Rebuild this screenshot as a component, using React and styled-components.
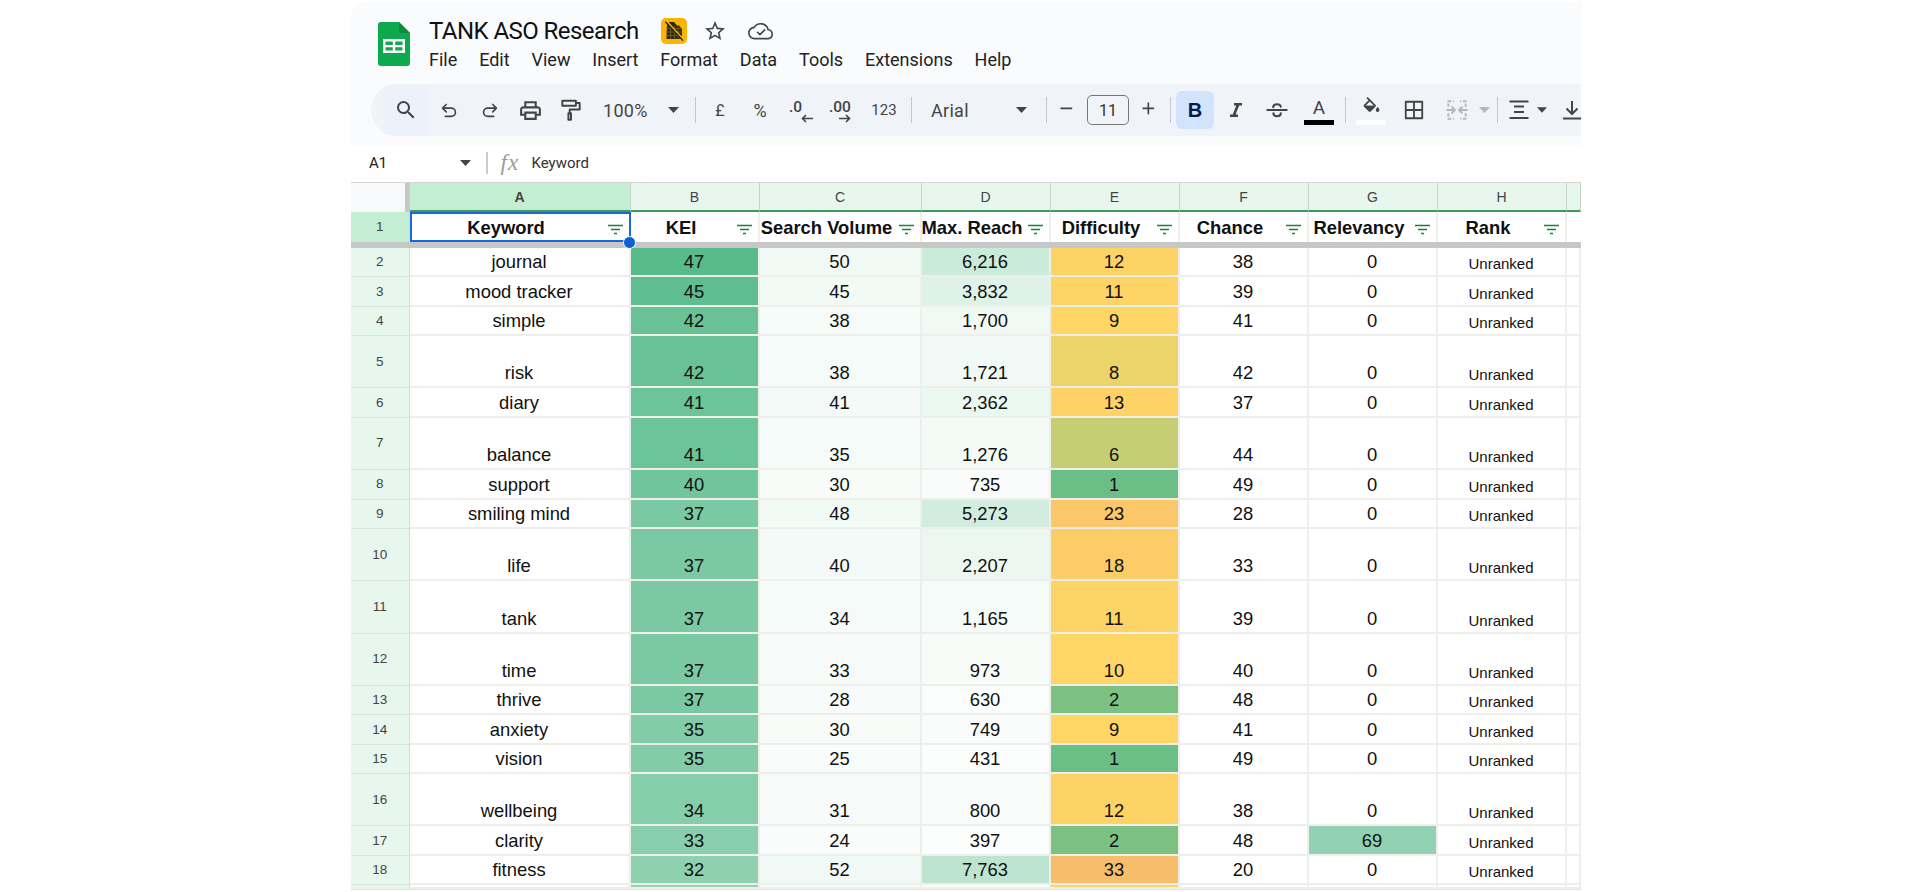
import React from "react";
import styled, { createGlobalStyle } from "styled-components";

const GlobalStyle = createGlobalStyle`
  html, body { margin: 0; padding: 0; background: #fff; height: 100%; overflow: hidden; }
  #root { height: 100%; }
  * { box-sizing: border-box; }
`;

const Page = styled.div`
  height: 892px;
  padding: 2px 339px 0 351px;
  background: #fff;
`;
const Panel = styled.div`
  height: 890px;
  overflow: hidden;
  display: flex;
  flex-direction: column;
  border-top-left-radius: 16px;
`;

/* ---------- header ---------- */
const Header = styled.header`
  background: #f9fbfd;
  height: 144px;
  flex: none;
`;
const TopBar = styled.div`
  height: 82px;
  display: flex;
  padding-left: 27px;
  font-family: Roboto, "Liberation Sans", sans-serif;
`;
const LogoBox = styled.div`
  margin-top: 20px;
  width: 32px;
  height: 44px;
  flex: none;
`;
const TitleBlock = styled.div`
  margin-left: 19px;
  padding-top: 14px;
  display: flex;
  flex-direction: column;
`;
const TitleRow = styled.div`
  height: 30px;
  display: flex;
  align-items: center;
`;
const DocTitle = styled.div`
  font-size: 24px;
  letter-spacing: -0.55px;
  color: #111;
  width: 210px;
  white-space: nowrap;
`;
const Badge = styled.div`
  margin-left: 22px;
  width: 26px;
  height: 26px;
  border-radius: 5px;
  background: #fbb304;
  display: flex;
  align-items: center;
  justify-content: center;
`;
const StarBox = styled.div`
  margin-left: 16px;
  display: flex;
`;
const CloudBox = styled.div`
  margin-left: 21px;
  display: flex;
`;
const MenuRow = styled.nav`
  height: 28px;
  margin-top: -1px;
  display: flex;
  align-items: center;
  gap: 21.9px;
  font-size: 18px;
  color: #222;
`;
const MenuItem = styled.span`
  white-space: nowrap;
`;

/* ---------- toolbar ---------- */
const Toolbar = styled.div`
  margin-left: 20px;
  height: 52px;
  border-radius: 26px 0 0 26px;
  background: #f0f3f8;
  display: flex;
  align-items: center;
  padding-left: 12px;
  overflow: hidden;
  font-family: Roboto, "Liberation Sans", sans-serif;
  color: #444;
`;
const Tool = styled.div`
  flex: none;
  width: ${(p) => p.$w || 40}px;
  margin-left: ${(p) => p.$ml || 0}px;
  padding-left: ${(p) => p.$pl || 0}px;
  height: 38px;
  display: flex;
  align-items: center;
  justify-content: center;
  font-size: ${(p) => p.$size || 16}px;
  color: ${(p) => p.$color || "#444"};
`;
const SearchTool = styled(Tool)`
  height: 52px;
  background: #edf2fa;
`;
const Label = styled(Tool)`
  justify-content: flex-start;
  font-size: 18px;
  letter-spacing: 0.3px;
`;
const Sep = styled.div`
  flex: none;
  width: 1px;
  height: 26px;
  margin-left: ${(p) => p.$ml || 0}px;
  background: #c4c7cb;
`;
const SizeBox = styled.div`
  flex: none;
  width: 42px;
  height: 30px;
  margin-left: 1px;
  border: 1.5px solid #747775;
  border-radius: 5px;
  display: flex;
  align-items: center;
  justify-content: center;
  font-size: 16px;
  color: #333;
`;
const BoldButton = styled.div`
  flex: none;
  width: 38px;
  height: 38px;
  margin-left: 5px;
  border-radius: 6px;
  background: #d3e3fd;
  color: #041e49;
  display: flex;
  align-items: center;
  justify-content: center;
  font: 700 20px "Liberation Sans", sans-serif;
`;
const StackTool = styled(Tool)`
  flex-direction: column;
  gap: 2px;
  padding-top: 2px;
`;
const ColourBar = styled.div`
  width: 30px;
  height: 5px;
  background: ${(p) => p.$color};
`;
const Glyph = styled.span`
  height: 20px;
  line-height: 20px;
  font-size: 19px;
`;
const Decimal = styled.div`
  display: flex;
  flex-direction: column;
  align-items: flex-end;
  font-size: 15.5px;
  font-weight: 500;
  line-height: 14px;
  width: ${(p) => p.$w}px;
  margin-top: 2px;
`;
const DecimalText = styled.span`
  align-self: flex-start;
`;
const PushedArrow = styled.span`
  display: flex;
  margin-right: ${(p) => p.$mr || 0}px;
`;

/* ---------- formula bar ---------- */
const FormulaBar = styled.div`
  flex: none;
  height: 36px;
  padding-bottom: 2px;
  background: #fff;
  display: flex;
  align-items: center;
  font-family: Roboto, "Liberation Sans", sans-serif;
  color: #222;
`;
const CellName = styled.div`
  width: 109px;
  padding-left: 18px;
  font-size: 15px;
  flex: none;
`;
const FormulaSep = styled.div`
  flex: none;
  width: 1.5px;
  height: 22px;
  margin-left: 15px;
  background: #c9ccd0;
`;
const Fx = styled.div`
  margin-left: 13px;
  width: 19px;
  font: italic 23px "Liberation Serif", serif;
  letter-spacing: 1px;
  color: #9a9a9a;
  flex: none;
`;
const FormulaText = styled.div`
  margin-left: 12px;
  font-size: 15px;
  color: #333;
`;

/* ---------- sheet ---------- */
const columns = "58.5px 221px 129px 162px 129px 129px 129px 129px 129px 14.5px";
const SheetRow = styled.div`
  display: grid;
  grid-template-columns: ${columns};
  flex: none;
`;
const ColumnHeads = styled(SheetRow)`
  height: 30px;
  border-top: 1.5px solid #d3d6d4;
`;
const Corner = styled.div`
  background: #f8f9fa;
  border-right: 5px solid #c7c7c7;
`;
const ColumnHead = styled.div`
  background: ${(p) => (p.$active ? "#c3eed1" : "#e7f7ee")};
  border-right: 1.5px solid #c6d2ca;
  border-bottom: 2px solid #42985a;
  display: flex;
  align-items: center;
  justify-content: center;
  font: ${(p) => (p.$active ? 700 : 400)} 14px "Liberation Sans", sans-serif;
  color: #444;
`;
const TitleCells = styled(SheetRow)`
  height: 30px;
`;
const RowHead = styled.div`
  background: ${(p) => (p.$active ? "#c3eed1" : "#e7f7ee")};
  border-right: 1.5px solid #d3dbd5;
  border-bottom: ${(p) => (p.$plain ? 0 : "1.5px solid #d9e3dc")};
  display: flex;
  align-items: center;
  justify-content: center;
  padding-bottom: 1px;
  font: 13.5px "Liberation Sans", sans-serif;
  color: #444;
`;
const HeadCell = styled.div`
  position: relative;
  background: #fff;
  border-right: 2px solid #eeeeeb;
  padding-right: 26px;
  padding-top: 1px;
  display: flex;
  align-items: center;
  justify-content: center;
  white-space: nowrap;
  font: 700 18.4px "Liberation Sans", sans-serif;
  color: #111;
  outline: ${(p) => (p.$selected ? "2.5px solid #1a66dd" : "none")};
  outline-offset: -2.5px;
`;
const FilterMark = styled.svg`
  position: absolute;
  right: 6px;
  top: 12px;
`;
const Handle = styled.div`
  position: absolute;
  right: -7px;
  bottom: -7px;
  width: 13px;
  height: 13px;
  border-radius: 50%;
  background: #0f5fd6;
  border: 1px solid #fff;
  z-index: 2;
`;
const FreezeBar = styled.div`
  flex: none;
  height: 6px;
  background: #c7c7c7;
`;
const DataRow = styled(SheetRow)`
  height: ${(p) => (p.$tall ? 52.4 : 29.35)}px;
`;
const Cell = styled.div`
  display: flex;
  align-items: flex-end;
  justify-content: center;
  border-right: 2px solid #eeeeeb;
  border-bottom: 2px solid #eeeeeb;
  font: 18.4px/27px "Liberation Sans", sans-serif;
  color: #111;
  white-space: nowrap;
`;
const RankCell = styled(Cell)`
  font-size: 15px;
  line-height: 23px;
`;
const Rows = styled.div`
  flex: 1;
  min-height: 0;
  overflow: hidden;
  display: flex;
  flex-direction: column;
`;
const BottomEdge = styled.div`
  flex: none;
  height: 3px;
  border-top: 1.5px solid #e1e3e1;
  background: #fff;
`;
const PartialRow = styled(SheetRow)`
  height: 4px;
`;

/* ---------- colour scales ---------- */
const lerp = (a, b, t) => a.map((v, i) => Math.round(v + (b[i] - v) * t));
const rgb = (c) => `rgb(${c.join(",")})`;
const WHITE = [255, 255, 255];
const GREEN = [87, 187, 138];
const YELLOW = [255, 214, 102];
const RED = [230, 124, 115];
const greenScale = (v, max) => rgb(lerp(WHITE, GREEN, Math.min(v / max, 1)));
const diffScale = (v) =>
  v <= 9 ? rgb(lerp(GREEN, YELLOW, v / 9)) : rgb(lerp(YELLOW, RED, (v - 9) / 86));

const rows = [
  ["journal", 47, 50, 6216, 12, 38, 0],
  ["mood tracker", 45, 45, 3832, 11, 39, 0],
  ["simple", 42, 38, 1700, 9, 41, 0],
  ["risk", 42, 38, 1721, 8, 42, 0, true],
  ["diary", 41, 41, 2362, 13, 37, 0],
  ["balance", 41, 35, 1276, 6, 44, 0, true],
  ["support", 40, 30, 735, 1, 49, 0],
  ["smiling mind", 37, 48, 5273, 23, 28, 0],
  ["life", 37, 40, 2207, 18, 33, 0, true],
  ["tank", 37, 34, 1165, 11, 39, 0, true],
  ["time", 37, 33, 973, 10, 40, 0, true],
  ["thrive", 37, 28, 630, 2, 48, 0],
  ["anxiety", 35, 30, 749, 9, 41, 0],
  ["vision", 35, 25, 431, 1, 49, 0],
  ["wellbeing", 34, 31, 800, 12, 38, 0, true],
  ["clarity", 33, 24, 397, 2, 48, 69],
  ["fitness", 32, 52, 7763, 33, 20, 0],
];
const heads = ["Keyword", "KEI", "Search Volume", "Max. Reach", "Difficulty", "Chance", "Relevancy", "Rank"];

/* ---------- icons ---------- */
const Icon = ({ size = 24, vb = "0 0 24 24", color = "#444", children }) => (
  <svg width={size} height={size} viewBox={vb} fill="none" stroke={color} strokeWidth="1.8" strokeLinecap="round" strokeLinejoin="round">
    {children}
  </svg>
);
const Fill = ({ d, color = "#444" }) => <path d={d} fill={color} stroke="none" />;

const SheetsLogo = () => (
  <svg width="32" height="44" viewBox="0 0 32 44">
    <path d="M3 0H21L32 11V41a3 3 0 0 1-3 3H3a3 3 0 0 1-3-3V3a3 3 0 0 1 3-3z" fill="#0ea94f" />
    <path d="M21 0L32 11H23a2 2 0 0 1-2-2z" fill="#0b8a40" />
    <path d="M5 17H27V31H5zM7.5 19.5V23H14.8V19.5zM17.2 19.5V23H24.5V19.5zM7.5 25.2V28.5H14.8V25.2zM17.2 25.2V28.5H24.5V25.2z" fill="#fff" fillRule="evenodd" />
  </svg>
);
const BadgeIcon = () => (
  <svg width="24" height="24" viewBox="0 0 24 24">
    <path d="M5 3H12L15 6.5H17L20 10V20H4.5z" fill="#2b2a20" />
    <path d="M4.5 9.5H20M4.5 13H20M4.5 16.5H20M8.5 7V20M12.5 7V20M16 7V20" stroke="#7f6a14" strokeWidth=".7" fill="none" />
    <path d="M4.2 1.6L22 21" stroke="#fbb304" strokeWidth="1.6" />
    <path d="M3.4 2.8L21 21.6" stroke="#2b2a20" strokeWidth="1.3" />
  </svg>
);
const StarIcon = () => (
  <Icon><Fill d="M22 9.24l-7.19-.62L12 2 9.19 8.63 2 9.24l5.46 4.73L5.82 21 12 17.27 18.18 21l-1.63-7.03L22 9.24zM12 15.4l-3.76 2.27 1-4.28-3.32-2.88 4.38-.38L12 6.1l1.71 4.04 4.38.38-3.32 2.88 1 4.28L12 15.4z" /></Icon>
);
const CloudIcon = () => (
  <Icon size={26}>
    <path d="M19 19H6.2a5.2 5.2 0 0 1-.4-10.4A7 7 0 0 1 18.6 10.9 4.1 4.1 0 0 1 19 19z" strokeWidth="1.5" />
    <path d="M8.8 13.2L11 15.4L15.4 11" strokeWidth="1.5" />
  </Icon>
);
const SearchIcon = () => (
  <Icon><Fill d="M15.5 14h-.79l-.28-.27A6.47 6.47 0 0 0 16 9.5 6.5 6.5 0 1 0 9.5 16c1.61 0 3.09-.59 4.23-1.57l.27.28v.79l5 4.99L20.49 19l-4.99-5zm-6 0C7.01 14 5 11.99 5 9.5S7.01 5 9.5 5 14 7.01 14 9.5 11.99 14 9.5 14z" /></Icon>
);
const UndoIcon = () => (
  <Icon size={22}><path d="M9 6L5 10L9 14M5 10H14.5a4.5 4.5 0 0 1 0 9H8" /></Icon>
);
const RedoIcon = () => (
  <Icon size={22}><path d="M15 6L19 10L15 14M19 10H9.5a4.5 4.5 0 0 0 0 9H16" /></Icon>
);
const PrintIcon = () => (
  <Icon size={25}><Fill d="M19 8h-1V3H6v5H5c-1.66 0-3 1.34-3 3v6h4v4h12v-4h4v-6c0-1.66-1.34-3-3-3zM8 5h8v3H8V5zm8 12v2H8v-4h8v2zm2-2v-2H6v2H4v-4c0-.55.45-1 1-1h14c.55 0 1 .45 1 1v4h-2z" /></Icon>
);
const PaintIcon = () => (
  <Icon size={26}>
    <path d="M4 3.5H16.5V8H4zM16.5 5.5H20V11.5H10.8V15" />
    <path d="M9.6 15H12V21H9.6z" />
  </Icon>
);
const Caret = ({ color = "#444" }) => (
  <svg width="11" height="6" viewBox="0 0 11 6"><path d="M0 0H11L5.5 6z" fill={color} /></svg>
);
const ArrowLeft = () => (
  <svg width="12" height="9" viewBox="0 0 12 9" fill="none" stroke="#444" strokeWidth="1.6"><path d="M12 4.5H1.5M5 1L1.5 4.5L5 8" /></svg>
);
const ArrowRight = () => (
  <svg width="12" height="9" viewBox="0 0 12 9" fill="none" stroke="#444" strokeWidth="1.6"><path d="M0 4.5H10.5M7 1L10.5 4.5L7 8" /></svg>
);
const ItalicIcon = () => (
  <Icon size={24}><Fill d="M10 5v2.4h2.3l-3.6 9.2H6V19h8v-2.4h-2.4l3.6-9.2H18V5z" /></Icon>
);
const StrikeIcon = () => (
  <Icon size={26}>
    <path d="M3 12H21" strokeWidth="1.7" />
    <path d="M8.5 9.5C8.5 5.8 15.5 5.8 15.5 9" strokeWidth="1.9" />
    <path d="M8.7 15C8.7 18.6 15.5 18.6 15.5 15" strokeWidth="1.9" />
  </Icon>
);
const BucketIcon = () => (
  <Icon size={21}>
    <Fill d="M16.56 8.94L7.62 0 6.21 1.41l2.38 2.38-5.15 5.15c-.59.59-.59 1.54 0 2.12l5.5 5.5c.29.29.68.44 1.06.44s.77-.15 1.06-.44l5.5-5.5c.59-.58.59-1.53 0-2.12zM5.21 10L10 5.21 14.79 10H5.21zM19 11.5s-2 2.17-2 3.5c0 1.1.9 2 2 2s2-.9 2-2c0-1.33-2-3.5-2-3.5z" />
    <Fill d="M5 10H15L10 15z" />
  </Icon>
);
const BordersIcon = () => (
  <Icon size={22}><path d="M3 3H21V21H3zM12 3V21M3 12H21" strokeWidth="2" strokeLinecap="butt" /></Icon>
);
const MergeIcon = () => (
  <Icon size={26} color="#b4b6b9">
    <path d="M4 9V4H9M20 9V4H15M4 15V20H9M20 15V20H15" strokeLinecap="butt" strokeDasharray="3 1.5" />
    <path d="M3 12H10M7.5 9.5L10 12L7.5 14.5M21 12H14M16.5 9.5L14 12L16.5 14.5" />
  </Icon>
);
const AlignIcon = () => (
  <Icon size={24}><path d="M2.5 3.5H21.5M7 8.5H17M7 14H17M2.5 20H21.5" strokeWidth="2" strokeLinecap="butt" /></Icon>
);
const ValignIcon = () => (
  <Icon size={24}><path d="M12 3V15M6.5 10.5L12 16L17.5 10.5M3 20.5H21" strokeWidth="2" strokeLinecap="butt" /></Icon>
);
const MinusIcon = () => (
  <Icon size={20}><path d="M3 10H17" strokeWidth="2" strokeLinecap="butt" /></Icon>
);
const PlusIcon = () => (
  <Icon size={20}><path d="M3 10H17M10 3V17" strokeWidth="2" strokeLinecap="butt" /></Icon>
);
const FilterIcon = () => (
  <FilterMark width="15" height="11" viewBox="0 0 15 11" fill="none" stroke="#188038" strokeWidth="1.3">
    <path d="M0 1.5H15M3 5.5H12M6 9.5H9" />
  </FilterMark>
);

const menu = ["File", "Edit", "View", "Insert", "Format", "Data", "Tools", "Extensions", "Help"];
const letters = ["A", "B", "C", "D", "E", "F", "G", "H", ""];

export default function App() {
  return (
    <Page>
      <GlobalStyle />
      <Panel>
        <Header>
          <TopBar>
            <LogoBox><SheetsLogo /></LogoBox>
            <TitleBlock>
              <TitleRow>
                <DocTitle>TANK ASO Research</DocTitle>
                <Badge><BadgeIcon /></Badge>
                <StarBox><StarIcon /></StarBox>
                <CloudBox><CloudIcon /></CloudBox>
              </TitleRow>
              <MenuRow>
                {menu.map((m) => <MenuItem key={m}>{m}</MenuItem>)}
              </MenuRow>
            </TitleBlock>
          </TopBar>
          <Toolbar>
            <SearchTool $w={46}><SearchIcon /></SearchTool>
            <Tool $w={40}><UndoIcon /></Tool>
            <Tool $w={41}><RedoIcon /></Tool>
            <Tool $w={41}><PrintIcon /></Tool>
            <Tool $w={40}><PaintIcon /></Tool>
            <Label $w={70} $pl={12}>100%</Label>
            <Tool $w={24}><Caret /></Tool>
            <Sep $ml={10} />
            <Tool $w={40} $ml={4} $size={16}>£</Tool>
            <Tool $w={40} $size={18}>%</Tool>
            <Tool $w={42}>
              <Decimal $w={24}><DecimalText>.0</DecimalText><ArrowLeft /></Decimal>
            </Tool>
            <Tool $w={40}>
              <Decimal $w={26}><DecimalText>.00</DecimalText><PushedArrow $mr={4}><ArrowRight /></PushedArrow></Decimal>
            </Tool>
            <Tool $w={44} $size={15}>123</Tool>
            <Sep $ml={5} />
            <Label $w={97} $pl={19}>Arial</Label>
            <Tool $w={24}><Caret /></Tool>
            <Sep $ml={13} />
            <Tool $w={39} $pl={2}><MinusIcon /></Tool>
            <SizeBox>11</SizeBox>
            <Tool $w={38} $pl={4}><PlusIcon /></Tool>
            <Sep $ml={3} />
            <BoldButton>B</BoldButton>
            <Tool $w={42} $pl={2}><ItalicIcon /></Tool>
            <Tool $w={42}><StrikeIcon /></Tool>
            <StackTool $w={42}>
              <Glyph>A</Glyph>
              <ColourBar $color="#000" />
            </StackTool>
            <Sep $ml={5} />
            <StackTool $w={50}>
              <BucketIcon />
              <ColourBar $color="#fff" />
            </StackTool>
            <Tool $w={36}><BordersIcon /></Tool>
            <Tool $w={40} $ml={5}><MergeIcon /></Tool>
            <Tool $w={14}><Caret color="#b4b6b9" /></Tool>
            <Sep $ml={6} />
            <Tool $w={36} $ml={3}><AlignIcon /></Tool>
            <Tool $w={10}><Caret /></Tool>
            <Tool $w={40} $ml={5}><ValignIcon /></Tool>
          </Toolbar>
        </Header>

        <FormulaBar>
          <CellName>A1</CellName>
          <Caret />
          <FormulaSep />
          <Fx>fx</Fx>
          <FormulaText>Keyword</FormulaText>
        </FormulaBar>

        <Rows>
          <ColumnHeads>
            <Corner />
            {letters.map((l, i) => (
              <ColumnHead key={i} $active={i === 0}>{l}</ColumnHead>
            ))}
          </ColumnHeads>
          <TitleCells>
            <RowHead $active $plain>1</RowHead>
            {heads.map((h, i) => (
              <HeadCell key={h} $selected={i === 0}>
                {h}
                <FilterIcon />
                {i === 0 && <Handle />}
              </HeadCell>
            ))}
            <HeadCell />
          </TitleCells>
          <FreezeBar />
          {rows.map(([kw, kei, vol, reach, diff, chance, rel, tall], i) => (
            <DataRow key={kw} $tall={tall}>
              <RowHead>{i + 2}</RowHead>
              <Cell>{kw}</Cell>
              <Cell style={{ backgroundColor: greenScale(kei, 47) }}>{kei}</Cell>
              <Cell style={{ backgroundColor: greenScale(vol, 600) }}>{vol}</Cell>
              <Cell style={{ backgroundColor: greenScale(reach, 19800) }}>{reach.toLocaleString("en-GB")}</Cell>
              <Cell style={{ backgroundColor: diffScale(diff) }}>{diff}</Cell>
              <Cell>{chance}</Cell>
              <Cell style={{ backgroundColor: greenScale(rel, 104) }}>{rel}</Cell>
              <RankCell>Unranked</RankCell>
              <Cell />
            </DataRow>
          ))}
          <PartialRow>
            <RowHead $plain />
            <Cell />
            <Cell style={{ backgroundColor: greenScale(31, 47) }} />
            <Cell style={{ backgroundColor: greenScale(30, 600) }} />
            <Cell style={{ backgroundColor: greenScale(500, 19800) }} />
            <Cell style={{ backgroundColor: diffScale(12) }} />
            <Cell />
            <Cell />
            <Cell />
            <Cell />
          </PartialRow>
          <BottomEdge />
        </Rows>
      </Panel>
    </Page>
  );
}
